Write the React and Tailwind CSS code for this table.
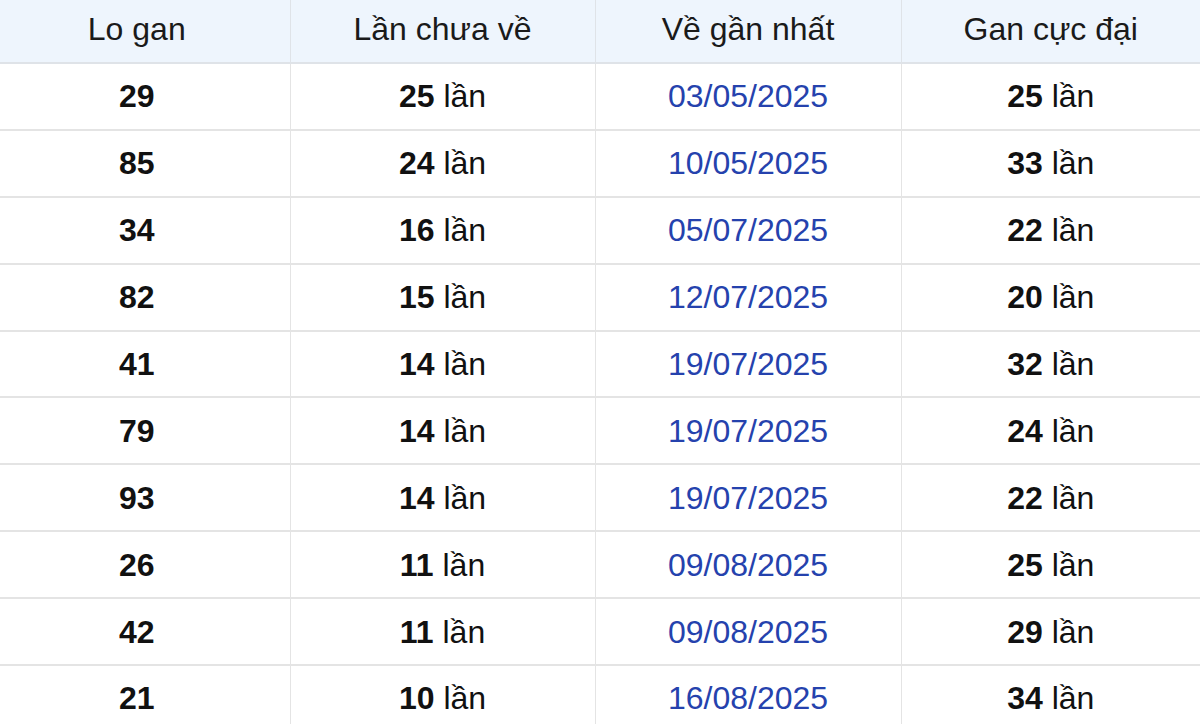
const rows = [
  ['29', '25', '03/05/2025', '25'],
  ['85', '24', '10/05/2025', '33'],
  ['34', '16', '05/07/2025', '22'],
  ['82', '15', '12/07/2025', '20'],
  ['41', '14', '19/07/2025', '32'],
  ['79', '14', '19/07/2025', '24'],
  ['93', '14', '19/07/2025', '22'],
  ['26', '11', '09/08/2025', '25'],
  ['42', '11', '09/08/2025', '29'],
  ['21', '10', '16/08/2025', '34'],
];

export default function App() {
  return (
    <div className="w-[1200px] h-[724px] overflow-hidden bg-white font-['Liberation_Sans',Arial,sans-serif] text-[32px] text-[#111]">
      <table className="w-full table-fixed border-collapse">
        <colgroup>
          <col className="w-[290px]" />
          <col className="w-[305px]" />
          <col className="w-[306px]" />
          <col />
        </colgroup>
        <thead>
          <tr className="h-[63px] bg-[#eef5fd] text-[#1a1a1a]">
            <th className="font-normal border-r border-b-2 border-[#dfe3e8] pb-1 pr-[16px]">Lo gan</th>
            <th className="font-normal border-r border-b-2 border-[#dfe3e8] pb-1">Lần chưa về</th>
            <th className="font-normal border-r border-b-2 border-[#dfe3e8] pb-1">Về gần nhất</th>
            <th className="font-normal border-b-2 border-[#dfe3e8] pb-1">Gan cực đại</th>
          </tr>
        </thead>
        <tbody>
          {rows.map((r, i) => (
            <tr key={i} className="h-[66.9px] border-b-2 border-[#e4e4e4]">
              <td className="text-center font-bold border-r border-[#e4e4e4] pr-[16px]">{r[0]}</td>
              <td className="text-center border-r border-[#e4e4e4]">
                <b>{r[1]}</b> lần
              </td>
              <td className="text-center border-r border-[#e4e4e4] text-[#2542ad]">{r[2]}</td>
              <td className="text-center">
                <b>{r[3]}</b> lần
              </td>
            </tr>
          ))}
        </tbody>
      </table>
    </div>
  );
}
